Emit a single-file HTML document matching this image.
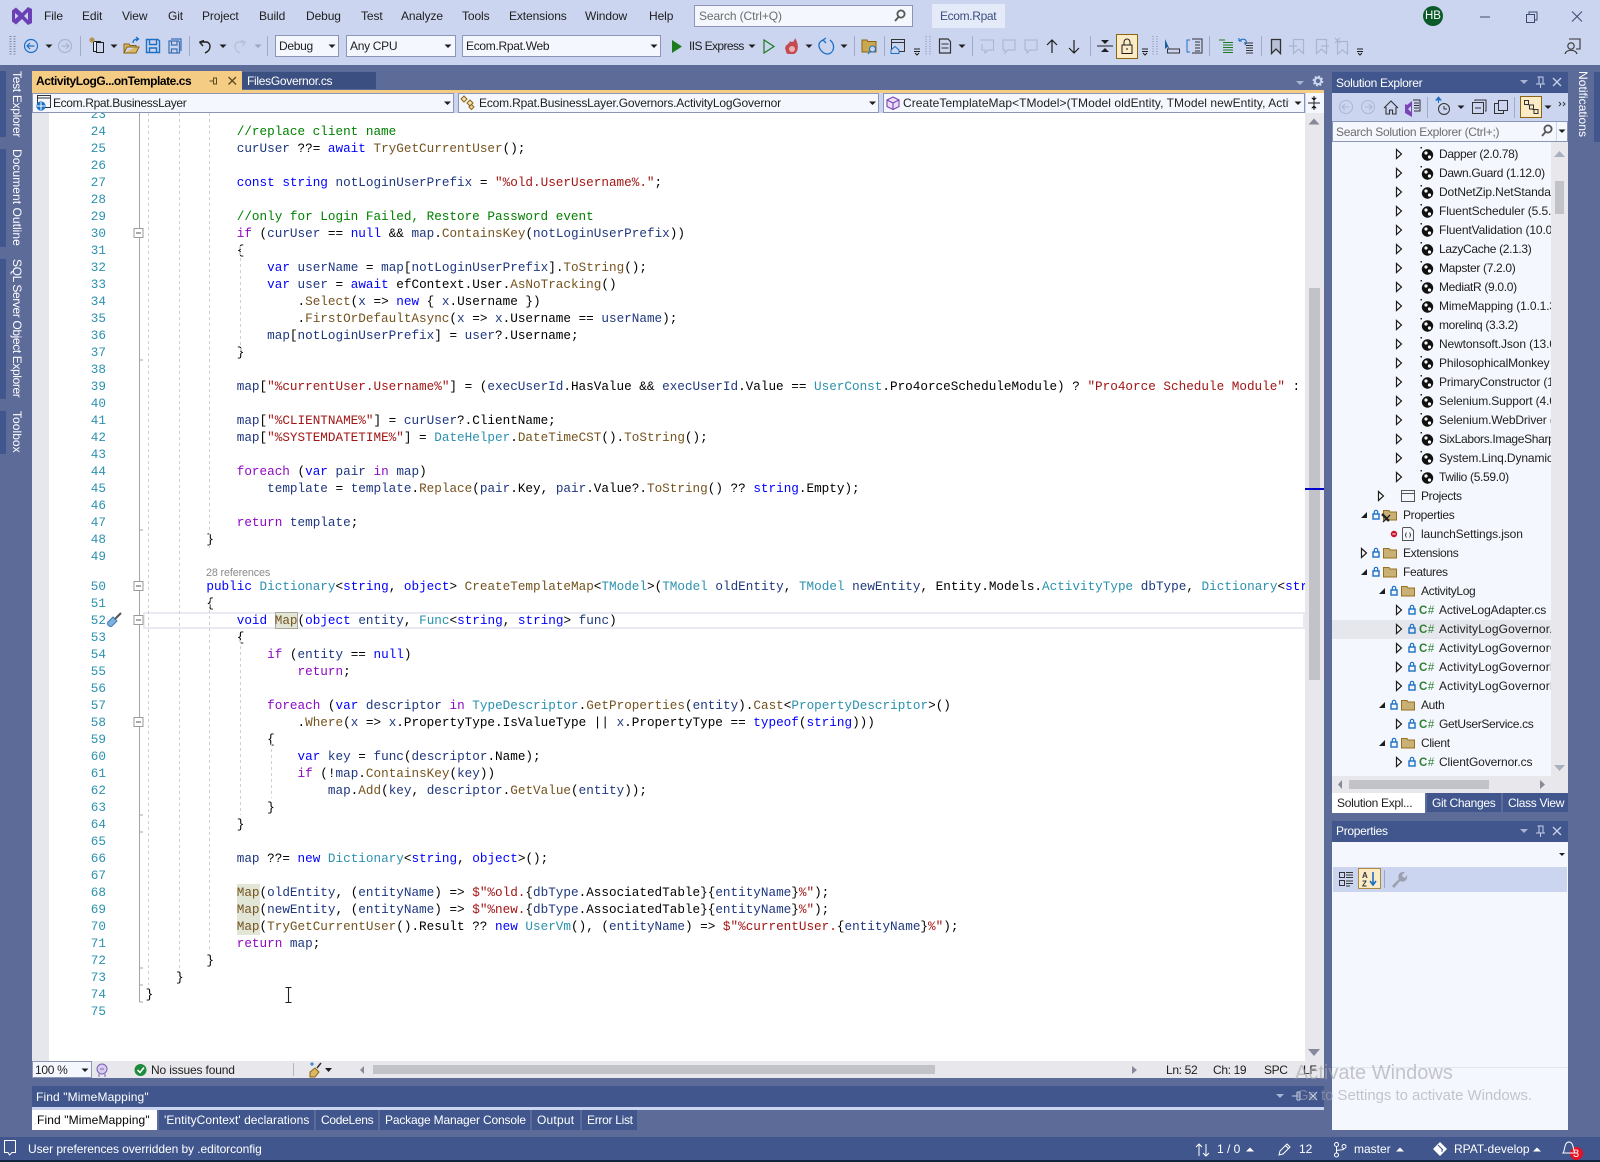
<!DOCTYPE html>
<html lang="en"><head><meta charset="utf-8"><title>Ecom.Rpat</title>
<style>
html,body{margin:0;padding:0;width:1600px;height:1162px;overflow:hidden;background:#5D6B99}
body{position:relative;font:12px/16px "Liberation Sans",sans-serif;color:#1E1E1E}
.b{position:absolute}
.t{position:absolute;white-space:nowrap;letter-spacing:-.1px}
.n{letter-spacing:-.35px}
.w{color:#fff;letter-spacing:-.3px}
.combo{position:absolute;background:#F5F7FE;border:1px solid #8A95B8;box-sizing:border-box;white-space:nowrap;overflow:hidden;line-height:19px;padding-left:3px;letter-spacing:-.3px}
.v{position:absolute;writing-mode:vertical-rl;white-space:nowrap;color:#fff;left:9px;letter-spacing:.05px}
.bar{position:absolute;background:#40568D}
pre{position:absolute;margin:0;font:12.67px/17px "Liberation Mono",monospace;color:#000;white-space:pre}
.k{color:#0000FF}.c{color:#8F08C4}.y{color:#2B91AF}.m{color:#74531F}.s{color:#A31515}.g{color:#008000}.l{color:#1F377F}
.hl{background:#E2E6D6;display:inline-block;height:17px}
#tree div{height:19px;line-height:19px;white-space:nowrap;position:absolute;letter-spacing:-.33px}
#tree div.wd{letter-spacing:-.12px}
#tree div.wa{letter-spacing:.15px}
.cs{position:absolute;left:87px;font-size:11.5px;color:#2F8033;letter-spacing:.6px;line-height:20px}
.cs b{font-weight:bold}
.tab{position:absolute;top:1110px;height:20px;background:#40568D;color:#fff;line-height:21px;white-space:nowrap;box-sizing:border-box;letter-spacing:-.05px}
svg{position:absolute;left:0;top:0;overflow:visible}
</style></head><body>

<div class="b" style="left:0;top:0;width:1600px;height:65px;background:#CCD5F0"></div>

<!-- menu -->
<span class="t" style="left:44px;top:8px">File</span>
<span class="t" style="left:82px;top:8px">Edit</span>
<span class="t" style="left:122px;top:8px">View</span>
<span class="t" style="left:168px;top:8px">Git</span>
<span class="t" style="left:202px;top:8px">Project</span>
<span class="t" style="left:259px;top:8px">Build</span>
<span class="t" style="left:306px;top:8px">Debug</span>
<span class="t" style="left:361px;top:8px">Test</span>
<span class="t" style="left:401px;top:8px">Analyze</span>
<span class="t" style="left:462px;top:8px">Tools</span>
<span class="t" style="left:509px;top:8px">Extensions</span>
<span class="t" style="left:585px;top:8px">Window</span>
<span class="t" style="left:649px;top:8px">Help</span>
<div class="b" style="left:694px;top:5px;width:219px;height:22px;background:#F5F7FE;border:1px solid #8A95B8;box-sizing:border-box"></div>
<span class="t" style="left:699px;top:8px;color:#6D6D6D">Search (Ctrl+Q)</span>
<div class="b" style="left:932px;top:4px;width:73px;height:24px;background:#E4EAF8"></div>
<span class="t n" style="left:940px;top:8px;color:#3B4F81">Ecom.Rpat</span>
<div class="b" style="left:1423px;top:6px;width:20px;height:20px;border-radius:50%;background:#0B5A2A"></div>
<span class="t" style="left:1425px;top:8px;color:#fff;font-size:11.5px;letter-spacing:0">HB</span>

<!-- toolbar combos -->
<div class="combo" style="left:275px;top:35px;width:64px;height:22px;line-height:21px">Debug</div>
<div class="combo" style="left:346px;top:35px;width:110px;height:22px;line-height:21px">Any CPU</div>
<div class="combo" style="left:462px;top:35px;width:199px;height:22px;line-height:21px">Ecom.Rpat.Web</div>
<span class="t" style="left:689px;top:38px;color:#1E1E1E;letter-spacing:-.6px">IIS Express</span>

<!-- left vertical tabs -->
<div class="bar" style="left:0;top:71px;width:6px;height:66px"></div>
<div class="bar" style="left:0;top:149px;width:6px;height:98px"></div>
<div class="bar" style="left:0;top:259px;width:6px;height:140px"></div>
<div class="bar" style="left:0;top:411px;width:6px;height:43px"></div>
<span class="v" style="top:71px;letter-spacing:-.3px">Test Explorer</span>
<span class="v" style="top:149px">Document Outline</span>
<span class="v" style="top:259px;letter-spacing:-.38px">SQL Server Object Explorer</span>
<span class="v" style="top:411px">Toolbox</span>
<div class="bar" style="left:1594px;top:72px;width:6px;height:70px"></div>
<span class="v" style="left:1575px;top:71px">Notifications</span>

<!-- doc tabs -->
<div class="b" style="left:32px;top:71px;width:210px;height:19px;background:#F5CC84"></div>
<span class="t" style="left:36px;top:73px;font-weight:bold;letter-spacing:-.45px;color:#000">ActivityLogG...onTemplate.cs</span>
<div class="b" style="left:242px;top:72px;width:134px;height:17px;background:#3B4F81"></div>
<span class="t w" style="left:247px;top:73px">FilesGovernor.cs</span>
<div class="b" style="left:32px;top:90px;width:1292px;height:3px;background:#F5CC84"></div>

<!-- nav bar -->
<div class="b" style="left:32px;top:93px;width:1292px;height:20px;background:#CCD5F0"></div>
<div class="combo" style="left:32px;top:93px;width:422px;height:20px;padding-left:20px;letter-spacing:-.35px">Ecom.Rpat.BusinessLayer</div>
<div class="combo" style="left:458px;top:93px;width:421px;height:20px;padding-left:20px;letter-spacing:-.18px">Ecom.Rpat.BusinessLayer.Governors.ActivityLogGovernor</div>
<div class="combo" style="left:883px;top:93px;width:422px;height:20px;padding-left:19px;padding-right:16px;letter-spacing:.06px"><div style="width:386px;overflow:hidden">CreateTemplateMap&lt;TModel&gt;(TModel oldEntity, TModel newEntity, ActivityType dbType)</div></div>
<div class="b" style="left:1306px;top:93px;width:18px;height:20px;background:#F5F7FE"></div>

<!-- editor -->
<div class="b" style="left:32px;top:113px;width:17px;height:948px;background:#E6E7ED"></div>
<div class="b" style="left:49px;top:113px;width:1256px;height:948px;background:#fff"></div>
<div class="b" style="left:1305px;top:113px;width:19px;height:948px;background:#E8E8EC"></div>
<div class="b" style="left:1309px;top:288px;width:11px;height:392px;background:#C2C3C9"></div>
<div class="b" style="left:1305px;top:488px;width:19px;height:2px;background:#0000CD"></div>
<div class="b" style="left:143px;top:612px;width:1162px;height:17px;box-sizing:border-box;border:2px solid #EAEAF2"></div>
<div class="b" style="left:275px;top:612px;width:23px;height:17px;box-sizing:border-box;background:#E2E6D6;border:1px solid #A8A8A0"></div>

<div class="b" style="left:49px;top:113px;width:1256px;height:948px;overflow:hidden">
<pre style="right:1199px;top:-7px;color:#2B91AF;text-align:right">23
24
25
26
27
28
29
30
31
32
33
34
35
36
37
38
39
40
41
42
43
44
45
46
47
48
49</pre>
<pre style="right:1199px;top:465px;color:#2B91AF;text-align:right">50
51
52
53
54
55
56
57
58
59
60
61
62
63
64
65
66
67
68
69
70
71
72
73
74
75</pre>
<span class="t" style="left:157px;top:452px;font-size:10.8px;color:#8A8A8A;letter-spacing:-.15px">28 references</span>
<pre style="left:96.6px;top:-7px">

            <span class="g">//replace client name</span>
            <span class="l">curUser</span> ??= <span class="k">await</span> <span class="m">TryGetCurrentUser</span>();

            <span class="k">const</span> <span class="k">string</span> <span class="l">notLoginUserPrefix</span> = <span class="s">"%old.UserUsername%."</span>;

            <span class="g">//only for Login Failed, Restore Password event</span>
            <span class="c">if</span> (<span class="l">curUser</span> == <span class="k">null</span> &amp;&amp; <span class="l">map</span>.<span class="m">ContainsKey</span>(<span class="l">notLoginUserPrefix</span>))
            {
                <span class="k">var</span> <span class="l">userName</span> = <span class="l">map</span>[<span class="l">notLoginUserPrefix</span>].<span class="m">ToString</span>();
                <span class="k">var</span> <span class="l">user</span> = <span class="k">await</span> efContext.User.<span class="m">AsNoTracking</span>()
                    .<span class="m">Select</span>(<span class="l">x</span> =&gt; <span class="k">new</span> { <span class="l">x</span>.Username })
                    .<span class="m">FirstOrDefaultAsync</span>(<span class="l">x</span> =&gt; <span class="l">x</span>.Username == <span class="l">userName</span>);
                <span class="l">map</span>[<span class="l">notLoginUserPrefix</span>] = <span class="l">user</span>?.Username;
            }

            <span class="l">map</span>[<span class="s">"%currentUser.Username%"</span>] = (<span class="l">execUserId</span>.HasValue &amp;&amp; <span class="l">execUserId</span>.Value == <span class="y">UserConst</span>.Pro4orceScheduleModule) ? <span class="s">"Pro4orce Schedule Module"</span> : <span class="l">curUser</span>?.Username;

            <span class="l">map</span>[<span class="s">"%CLIENTNAME%"</span>] = <span class="l">curUser</span>?.ClientName;
            <span class="l">map</span>[<span class="s">"%SYSTEMDATETIME%"</span>] = <span class="y">DateHelper</span>.<span class="m">DateTimeCST</span>().<span class="m">ToString</span>();

            <span class="c">foreach</span> (<span class="k">var</span> <span class="l">pair</span> <span class="c">in</span> <span class="l">map</span>)
                <span class="l">template</span> = <span class="l">template</span>.<span class="m">Replace</span>(<span class="l">pair</span>.Key, <span class="l">pair</span>.Value?.<span class="m">ToString</span>() ?? <span class="k">string</span>.Empty);

            <span class="c">return</span> <span class="l">template</span>;
        }</pre>
<pre style="left:96.6px;top:465px">        <span class="k">public</span> <span class="y">Dictionary</span>&lt;<span class="k">string</span>, <span class="k">object</span>&gt; <span class="m">CreateTemplateMap</span>&lt;<span class="y">TModel</span>&gt;(<span class="y">TModel</span> <span class="l">oldEntity</span>, <span class="y">TModel</span> <span class="l">newEntity</span>, Entity.Models.<span class="y">ActivityType</span> <span class="l">dbType</span>, <span class="y">Dictionary</span>&lt;<span class="k">string</span>, <span class="k">object</span>&gt; <span class="l">map</span> = <span class="k">null</span>)
        {
            <span class="k">void</span> <span class="m">Map</span>(<span class="k">object</span> <span class="l">entity</span>, <span class="y">Func</span>&lt;<span class="k">string</span>, <span class="k">string</span>&gt; <span class="l">func</span>)
            {
                <span class="c">if</span> (<span class="l">entity</span> == <span class="k">null</span>)
                    <span class="c">return</span>;

                <span class="c">foreach</span> (<span class="k">var</span> <span class="l">descriptor</span> <span class="c">in</span> <span class="y">TypeDescriptor</span>.<span class="m">GetProperties</span>(<span class="l">entity</span>).<span class="m">Cast</span>&lt;<span class="y">PropertyDescriptor</span>&gt;()
                    .<span class="m">Where</span>(<span class="l">x</span> =&gt; <span class="l">x</span>.PropertyType.IsValueType || <span class="l">x</span>.PropertyType == <span class="k">typeof</span>(<span class="k">string</span>)))
                {
                    <span class="k">var</span> <span class="l">key</span> = <span class="l">func</span>(<span class="l">descriptor</span>.Name);
                    <span class="c">if</span> (!<span class="l">map</span>.<span class="m">ContainsKey</span>(<span class="l">key</span>))
                        <span class="l">map</span>.<span class="m">Add</span>(<span class="l">key</span>, <span class="l">descriptor</span>.<span class="m">GetValue</span>(<span class="l">entity</span>));
                }
            }

            <span class="l">map</span> ??= <span class="k">new</span> <span class="y">Dictionary</span>&lt;<span class="k">string</span>, <span class="k">object</span>&gt;();

            <span class="hl"><span class="m">Map</span></span>(<span class="l">oldEntity</span>, (<span class="l">entityName</span>) =&gt; <span class="s">$"%old.</span>{<span class="l">dbType</span>.AssociatedTable}{<span class="l">entityName</span>}<span class="s">%"</span>);
            <span class="hl"><span class="m">Map</span></span>(<span class="l">newEntity</span>, (<span class="l">entityName</span>) =&gt; <span class="s">$"%new.</span>{<span class="l">dbType</span>.AssociatedTable}{<span class="l">entityName</span>}<span class="s">%"</span>);
            <span class="hl"><span class="m">Map</span></span>(<span class="m">TryGetCurrentUser</span>().Result ?? <span class="k">new</span> <span class="y">UserVm</span>(), (<span class="l">entityName</span>) =&gt; <span class="s">$"%currentUser.</span>{<span class="l">entityName</span>}<span class="s">%"</span>);
            <span class="c">return</span> <span class="l">map</span>;
        }
    }
}</pre>
</div>

<!-- editor bottom strip -->
<div class="b" style="left:32px;top:1061px;width:1292px;height:17px;background:#E8E8EC"></div>
<div class="combo" style="left:32px;top:1061px;width:60px;height:17px;line-height:16px;padding-left:2px;letter-spacing:-.3px">100 %</div>
<span class="t" style="left:151px;top:1062px;letter-spacing:-.15px">No issues found</span>
<div class="b" style="left:373px;top:1065px;width:562px;height:9px;background:#C2C3C9"></div>
<span class="t n" style="left:1166px;top:1062px">Ln: 52</span>
<span class="t n" style="left:1213px;top:1062px">Ch: 19</span>
<span class="t n" style="left:1264px;top:1062px">SPC</span>
<span class="t n" style="left:1303px;top:1062px">LF</span>

<!-- find panel -->
<div class="b" style="left:32px;top:1086px;width:1292px;height:21px;background:#40568D"></div>
<div class="b" style="left:32px;top:1107px;width:1292px;height:3px;background:#CCD5F0"></div>
<span class="t w" style="left:36px;top:1089px;letter-spacing:.12px">Find "MimeMapping"</span>
<div class="tab" style="left:32px;width:125px;background:#fff;color:#000;padding-left:5px;letter-spacing:.12px">Find "MimeMapping"</div>
<div class="tab" style="left:159px;width:155px;padding-left:5px;letter-spacing:.05px">'EntityContext' declarations</div>
<div class="tab" style="left:316px;width:62px;padding-left:5px;letter-spacing:-.3px">CodeLens</div>
<div class="tab" style="left:380px;width:150px;padding-left:5px;letter-spacing:-.17px">Package Manager Console</div>
<div class="tab" style="left:532px;width:48px;padding-left:5px;letter-spacing:.2px">Output</div>
<div class="tab" style="left:582px;width:55px;padding-left:5px;letter-spacing:-.3px">Error List</div>

<!-- solution explorer -->
<div class="b" style="left:1332px;top:72px;width:236px;height:21px;background:#40568D"></div>
<span class="t w" style="left:1336px;top:75px">Solution Explorer</span>
<div class="b" style="left:1332px;top:93px;width:236px;height:29px;background:#CCD5F0"></div>
<div class="b" style="left:1332px;top:121px;width:236px;height:21px;background:#F5F7FE;border:1px solid #8A95B8;box-sizing:border-box"></div>
<span class="t" style="left:1336px;top:124px;color:#6D6D6D;letter-spacing:-.3px">Search Solution Explorer (Ctrl+;)</span>
<div class="b" style="left:1332px;top:142px;width:236px;height:634px;background:#F5F7FE"></div>
<div class="b" style="left:1551px;top:142px;width:17px;height:634px;background:#E8E8EC"></div>
<div class="b" style="left:1555px;top:181px;width:9px;height:33px;background:#C2C3C9"></div>
<div class="b" style="left:1332px;top:620px;width:219px;height:19px;background:#E6E7ED"></div>
<div class="b" style="left:1332px;top:776px;width:236px;height:17px;background:#E8E8EC"></div>
<div class="b" style="left:1349px;top:780px;width:140px;height:9px;background:#C2C3C9"></div>

<div id="tree" class="b" style="left:1332px;top:143px;width:219px;height:633px;overflow:hidden">
<div style="left:107px;top:2px">Dapper (2.0.78)</div>
<div style="left:107px;top:21px">Dawn.Guard (1.12.0)</div>
<div class="wd" style="left:107px;top:40px">DotNetZip.NetStandard (1.15.0)</div>
<div class="wd" style="left:107px;top:59px">FluentScheduler (5.5.1)</div>
<div class="wd" style="left:107px;top:78px">FluentValidation (10.0.0)</div>
<div style="left:107px;top:97px">LazyCache (2.1.3)</div>
<div style="left:107px;top:116px">Mapster (7.2.0)</div>
<div style="left:107px;top:135px">MediatR (9.0.0)</div>
<div class="wd" style="left:107px;top:154px">MimeMapping (1.0.1.37)</div>
<div style="left:107px;top:173px">morelinq (3.3.2)</div>
<div class="wd" style="left:107px;top:192px">Newtonsoft.Json (13.0.1)</div>
<div class="wd" style="left:107px;top:211px">PhilosophicalMonkey (1.0.0)</div>
<div class="wd" style="left:107px;top:230px">PrimaryConstructor (1.2.0)</div>
<div class="wd" style="left:107px;top:249px">Selenium.Support (4.0.0)</div>
<div class="wd" style="left:107px;top:268px">Selenium.WebDriver (4.0.0)</div>
<div style="left:107px;top:287px">SixLabors.ImageSharp (1.0.3)</div>
<div class="wd" style="left:107px;top:306px">System.Linq.Dynamic.Core</div>
<div style="left:107px;top:325px">Twilio (5.59.0)</div>
<div style="left:89px;top:344px">Projects</div>
<div style="left:71px;top:363px">Properties</div>
<div class="wd" style="left:89px;top:382px">launchSettings.json</div>
<div style="left:71px;top:401px">Extensions</div>
<div style="left:71px;top:420px">Features</div>
<div style="left:89px;top:439px">ActivityLog</div>
<div class="wd" style="left:107px;top:458px">ActiveLogAdapter.cs</div>
<div class="wa" style="left:107px;top:477px">ActivityLogGovernor.cs</div>
<div class="wa" style="left:107px;top:496px">ActivityLogGovernorCreate.cs</div>
<div class="wa" style="left:107px;top:515px">ActivityLogGovernorEdit.cs</div>
<div class="wa" style="left:107px;top:534px">ActivityLogGovernorMap.cs</div>
<div style="left:89px;top:553px">Auth</div>
<div style="left:107px;top:572px">GetUserService.cs</div>
<div class="wd" style="left:107px;top:610px">ClientGovernor.cs</div>
<div style="left:89px;top:591px">Client</div>
<span class="cs" style="top:458px"><b>C</b>#</span>
<span class="cs" style="top:477px"><b>C</b>#</span>
<span class="cs" style="top:496px"><b>C</b>#</span>
<span class="cs" style="top:515px"><b>C</b>#</span>
<span class="cs" style="top:534px"><b>C</b>#</span>
<span class="cs" style="top:572px"><b>C</b>#</span>
<span class="cs" style="top:610px"><b>C</b>#</span>
</div>

<div class="b" style="left:1332px;top:793px;width:93px;height:20px;background:#fff"></div>
<span class="t" style="left:1337px;top:795px;letter-spacing:-.3px">Solution Expl...</span>
<div class="b" style="left:1427px;top:793px;width:74px;height:19px;background:#40568D"></div>
<span class="t w" style="left:1432px;top:795px">Git Changes</span>
<div class="b" style="left:1503px;top:793px;width:65px;height:19px;background:#40568D"></div>
<span class="t w" style="left:1508px;top:795px">Class View</span>

<!-- properties -->
<div class="b" style="left:1332px;top:821px;width:236px;height:21px;background:#40568D"></div>
<span class="t w" style="left:1336px;top:823px">Properties</span>
<div class="b" style="left:1332px;top:842px;width:236px;height:288px;background:#F5F7FE"></div>
<div class="b" style="left:1333px;top:867px;width:234px;height:25px;background:#CCD5F0"></div>
<div class="b" style="left:1358px;top:868px;width:23px;height:21px;background:#FBEBC6;border:1px solid #B08A3C;box-sizing:border-box"></div>
<div class="b" style="left:1332px;top:1067px;width:236px;height:1px;background:#E4E6EE"></div>

<!-- status bar -->
<div class="b" style="left:0;top:1137px;width:1600px;height:23px;background:#40568D"></div>
<div class="b" style="left:0;top:1160px;width:1600px;height:2px;background:#10263F"></div>
<span class="t w" style="left:28px;top:1141px;letter-spacing:-.07px">User preferences overridden by .editorconfig</span>
<span class="t w" style="left:1217px;top:1141px;letter-spacing:0">1 / 0</span>
<span class="t w" style="left:1299px;top:1141px;letter-spacing:0">12</span>
<span class="t w" style="left:1354px;top:1141px;letter-spacing:0">master</span>
<span class="t w" style="left:1454px;top:1141px;letter-spacing:0">RPAT-develop</span>
<div class="b" style="left:1570px;top:1147px;width:13px;height:13px;border-radius:50%;background:#E81123"></div>
<span class="t" style="left:1573px;top:1146px;color:#fff;font-size:11px;letter-spacing:0">3</span>

<svg width="1600" height="1162" viewBox="0 0 1600 1162" fill="none">
<defs>
<path id="dd" d="M-3.5,-1.5H3.5L0,2Z" fill="#1E1E1E"/>
<g id="ddg"><path d="M-3.5,-1.5H3.5L0,2Z" fill="#9AA3BF"/></g>
<g id="ddw"><path d="M-4,-2H4L0,2Z" fill="#A9B4D4"/></g>
<g id="over"><path d="M-3,-1H3M-3,1.5H3M-2,3L0,5L2,3" stroke="#1E1E1E" stroke-width="1"/></g>
<g id="grip"><path d="M-2,-10V10M2,-10V10" stroke="#7C86A6" stroke-dasharray="1 1.5"/></g>
<g id="nuget"><circle cx="1" cy="1" r="5.7" fill="#111"/><circle cx="-.5" cy="-1" r="1.6" fill="#fff"/><circle cx="3" cy="3" r="1.6" fill="#fff"/><rect x="-6" y="-7" width="1.5" height="1.5" fill="#222"/></g>
<path id="ar" d="M-2.5,-4.5L2.5,0L-2.5,4.5Z" fill="#fff" stroke="#1E1E1E" stroke-width="1.2"/>
<path id="ex" d="M3,-3V3H-3Z" fill="#1E1E1E"/>
<g id="lock"><rect x="-3" y="-1" width="6" height="5" fill="none" stroke="#1B6FC4" stroke-width="1.4"/><path d="M-1.7,-1V-3a1.7,1.7 0 0 1 3.4,0V-1" stroke="#1B6FC4" stroke-width="1.2"/></g>
<g id="fold"><path d="M-6.5,-4.5H-1L0,-3H6.5V5H-6.5Z" fill="#C9B074" stroke="#96701F" stroke-width="1"/></g>
<g id="box"><rect x="-4.5" y="-4.5" width="9" height="9" fill="#fff" stroke="#9A9A9A"/><path d="M-2.5,0H2.5" stroke="#555"/></g>
</defs>

<!-- VS logo -->
<path d="M12,10.5L16,7.5L22,13L28,7L32,9V23L28,25L22,19L16,24.5L12,21.5Z" fill="#6B3FB5"/>
<path d="M15,13V19L18.5,16ZM28,12L24,16L28,20Z" fill="#CCD5F0"/>
<!-- search mag -->
<g transform="translate(900,16)" stroke="#555" stroke-width="1.8"><circle cx="1" cy="-2" r="3.6"/><path d="M-1.5,1L-5,5"/></g>
<!-- window buttons -->
<path d="M1480,17H1490" stroke="#3C4A70"/>
<g stroke="#3C4A70"><rect x="1526.5" y="14.5" width="8" height="8"/><path d="M1529,14V12H1537V20H1535"/><path d="M1572,11.5L1582,21.5M1582,11.5L1572,21.5"/></g>

<!-- toolbar icons -->
<use href="#grip" x="12" y="46"/><use href="#grip" x="13" y="46"/>
<g stroke="#1B6FC4" stroke-width="1.2"><circle cx="31" cy="46" r="6.5"/><path d="M34.5,46H27.5M30,43L27,46L30,49"/></g>
<use href="#dd" x="49" y="46"/>
<g stroke="#A9B4D0" stroke-width="1.2"><circle cx="65" cy="46" r="6.5"/><path d="M61.5,46H68.5M66,43L69,46L66,49"/></g>
<path d="M80.5,36V56M189.5,36V56M267.5,36V56M854.5,36V56M884.5,36V56M972.5,36V56M1090.5,36V56M1209.5,36V56M1261.5,36V56" stroke="#A0ABC8"/>
<g transform="translate(97,46)" stroke="#1E1E1E"><rect x="-3.5" y="-4.5" width="7" height="10" fill="#E4E8F6"/><rect x="-.5" y="-3.5" width="7" height="10" fill="#CCD5F0"/><path d="M-7,-8L-3,-4M-3,-8L-7,-4M-5,-9V-3M-8,-6H-2" stroke="#B08A3C"/></g>
<use href="#dd" x="114" y="46"/>
<g transform="translate(131,46)"><path d="M-7,7V-2H-2L-1,-.5H5V1H-4L-7,7H5L8,1H5" fill="#D9B765" stroke="#8A6410"/><path d="M2,-3C2,-6 4,-7 7,-7M5,-9L7.5,-7L5,-5" stroke="#1B6FC4" stroke-width="1.3"/></g>
<g transform="translate(153,46)" stroke="#1B6FC4" stroke-width="1.4"><path d="M-6.5,-6.5H5L6.5,-5V6.5H-6.5Z"/><path d="M-3.5,-6.5V-1.5H3.5V-6.5M-3.5,6.5V2H3.5V6.5"/></g>
<g transform="translate(175,46)" stroke="#3B6FB0" stroke-width="1.2"><path d="M-4,-7H6V5"/><path d="M-6,-5H3.5L4.5,-4V7H-6Z"/><path d="M-3.5,-5V-1H2V-5M-3.5,7V3H2V7"/></g>
<path d="M199.5,42L203,46M199.5,42L204,40.5M200,42H206C211,42 212,50 205,53" stroke="#1E1E1E" stroke-width="1.4"/>
<use href="#dd" x="223" y="46"/>
<path d="M245.5,42L242,46M245.5,42L241,40.5M245,42H239C234,42 233,50 240,53" stroke="#B8C0D8" stroke-width="1.4"/>
<use href="#ddg" x="258" y="46"/>
<use href="#dd" x="332" y="46"/><use href="#dd" x="448" y="46"/><use href="#dd" x="654" y="46"/>
<path d="M672,40V53L682,46.5Z" fill="#1E7B1E"/>
<use href="#dd" x="752" y="46"/>
<path d="M764,40V53L774,46.5Z" stroke="#1E7B1E" stroke-width="1.2"/>
<path d="M786,51C783,45 789,45 790,41C792,43 794,42 795,38C799,44 799,52 794,54H789C787,54 786,53 786,51Z" fill="#C44A52"/><circle cx="792" cy="49" r="3" fill="#EBB0B0"/>
<use href="#dd" x="809" y="46"/>
<path d="M823,40C814,44 822,54 827,54C834,54 836,45 830,40M826,38L823,40L826,43" stroke="#1B6FC4" stroke-width="1.3"/>
<use href="#dd" x="844" y="46"/>
<g transform="translate(869,46)"><path d="M-7,-6H-2L-1,-4.5H7V6H-7Z" fill="#C9A850" stroke="#8A6410"/><circle cx="3.5" cy="3" r="3" fill="#CCD5F0" stroke="#1B6FC4"/><path d="M1.5,5L-1,8" stroke="#1B6FC4"/></g>
<g transform="translate(898,46)"><rect x="-6.5" y="-6.5" width="13" height="12" stroke="#333"/><path d="M-6,-3.5H6" stroke="#333"/><path d="M-7,4L-3,0.5L1,4V7.5H-7Z" fill="#CCD5F0" stroke="#1B6FC4"/></g>
<use href="#over" x="917" y="50"/><use href="#grip" x="928" y="46"/>
<g transform="translate(945,46)" stroke="#333"><path d="M-5.5,-7H3L5.5,-4.5V7H-5.5Z" stroke-width="1.2"/><path d="M-3.5,-2H3.5M-3.5,2H3.5"/></g>
<use href="#dd" x="962" y="46"/>
<g stroke="#A9B4D0"><path d="M980.5,40H993.5V50H988L985,53V50H982V44"/><path d="M1003,40H1015V50H1008L1005,53V50H1003Z"/><path d="M1025,40H1037V50H1030L1027,53V50H1025Z"/></g>
<path d="M1052,53V40M1047,45L1052,40L1057,45" stroke="#1E1E1E" stroke-width="1.2"/>
<path d="M1074,40V53M1069,48L1074,53L1079,48" stroke="#1E1E1E" stroke-width="1.2"/>
<g transform="translate(1105,46)"><path d="M-8,0H8" stroke="#1E1E1E"/><path d="M-4,-6H4L0,-2ZM-4,6H4L0,2Z" fill="#1E1E1E"/></g>
<rect x="1116.5" y="34.5" width="21" height="24" fill="#FBEBC6" stroke="#8A6410"/>
<g transform="translate(1127,47)" stroke="#1E1E1E"><rect x="-5" y="-2" width="10" height="8.5"/><path d="M-3,-2V-5a3,3 0 0 1 6,0V-2M0,1V3"/></g>
<use href="#over" x="1145" y="50"/><use href="#grip" x="1155" y="46"/>
<g transform="translate(1172,46)"><path d="M-7,-7V3L-4.5,1L-2,4Z" fill="#1B5E9E"/><rect x="-4.5" y="3" width="12" height="4" stroke="#333"/></g>
<g transform="translate(1194,46)" stroke="#333"><path d="M-2,-7H8V7H-2M1,-4H6M1,-1H6M1,2H6M1,5H6"/><path d="M-4,-6H-7V6H-4" stroke="#1B6FC4"/></g>
<g transform="translate(1226,46)" stroke="#1E7B1E"><path d="M-7,-6H-1M-3,-3.5H7M-3,-1H7M-3,1.5H7M-3,4H7M-3,6.5H7"/></g>
<g transform="translate(1246,46)"><path d="M-2,-3H7M0,-.5H7M0,2H7M0,4.5H7M0,7H7" stroke="#333"/><path d="M-7,-5C-3,-9 3,-6 -1,-1M-7,-5V-8M-7,-5H-4" stroke="#1B6FC4" stroke-width="1.1"/></g>
<path d="M1271.5,39.5H1280.5V53.5L1276,49L1271.5,53.5Z" fill="#B8C0D8" stroke="#333" stroke-width="1.3"/>
<g stroke="#A9B4D0" stroke-width="1.2"><path d="M1293.5,39.5H1303.5V53.5L1298.5,49L1293.5,53.5ZM1289,46H1297"/><path d="M1316.5,39.5H1326.5V53.5L1321.5,49L1316.5,53.5ZM1321,46H1329"/><path d="M1337.5,41.5H1347.5V54L1342.5,50L1337.5,54ZM1335,38L1340,43M1340,38L1335,43"/></g>
<use href="#over" x="1360" y="50"/>
<g transform="translate(1572,46)" stroke="#333" stroke-width="1.1"><path d="M-3,-7H8V3H4"/><circle cx="-1" cy="0" r="3.2"/><path d="M-7,8C-6,3 4,3 5,8"/></g>

<!-- doc tab icons -->
<g transform="translate(213.5,81)" stroke="#5A4A20"><path d="M-4,0H0M0,-3V3H3V-3ZM3,0"/></g>
<path d="M228.5,77L236,84.5M236,77L228.5,84.5" stroke="#5A4A20" stroke-width="1.3"/>
<use href="#ddw" x="1300" y="83"/>
<g transform="translate(1318,81)"><circle r="3.2" stroke="#CCD5F0" stroke-width="2"/><circle r="4.6" stroke="#CCD5F0" stroke-width="1.6" stroke-dasharray="2 1.6"/></g>

<!-- nav icons -->
<use href="#dd" x="447.5" y="103"/><use href="#dd" x="872.5" y="103"/><use href="#dd" x="1298" y="103"/>
<g transform="translate(44,103)"><rect x="-6.5" y="-7.5" width="13" height="12" stroke="#333"/><path d="M-6,-5H6" stroke="#333"/><circle cx="-3" cy="3" r="4.6" fill="#1B6FC4"/><path d="M-7,3H1M-3,-1V7" stroke="#fff"/></g>
<g transform="translate(468,103)" stroke="#8A6410" fill="#F2DFAC"><path d="M-7,-4L-4,-7L-1,-4L-4,-1Z"/><path d="M-1,0L2,-3L5,0L2,3Z"/><path d="M1,4L3.5,1.5L6,4L3.5,6.5Z"/></g>
<g transform="translate(893,103)" stroke="#7A45B5" stroke-width="1.1" fill="#EBDFF7"><path d="M0,-6L6,-3V3.5L0,6.5L-6,3.5V-3Z"/><path d="M-6,-3L0,0L6,-3M0,0V6.5" fill="none"/></g>
<g transform="translate(1314,103)"><path d="M-6,0H6" stroke="#1E1E1E"/><path d="M0,-7V7" stroke="#1E1E1E"/><path d="M-2.5,-5H2.5L0,-2.5ZM-2.5,5H2.5L0,2.5Z" fill="#1E1E1E" stroke="#1E1E1E" stroke-width=".5"/></g>

<!-- editor decorations -->
<path d="M139.5,113V1002M139.5,360H143M139.5,530H143M139.5,815H143M139.5,832H143M139.5,968H143M139.5,985H143M139.5,1002H143" stroke="#A5A5A5"/>
<g stroke="#CFCFCF" stroke-dasharray="3 3">
<path d="M148.5,113V985"/><path d="M179.5,113V968"/><path d="M209.5,113V550M209.5,598V951"/>
<path d="M240.5,246V352"/><path d="M240.5,640V815"/><path d="M271.5,743V798"/>
</g>
<use href="#box" x="138.5" y="233"/><use href="#box" x="138.5" y="586"/><use href="#box" x="138.5" y="620"/><use href="#box" x="138.5" y="722"/>
<g transform="translate(115,620)"><path d="M-7,2L-2,-3L2,1L-3,6C-5,8 -9,4 -7,2Z" fill="#7FB0DE" stroke="#3B7DB8"/><path d="M0,-1L6,-7" stroke="#555" stroke-width="2"/></g>
<path d="M1314,118.5L1319.5,124.5H1308.5Z" fill="#868999"/>
<path d="M1308,1049H1320L1314,1056Z" fill="#868999"/>
<path d="M285.5,987.5H291.5M288.5,987.5V1002.5M285.5,1002.5H291.5" stroke="#222" stroke-width="1.1"/>

<!-- editor status icons -->
<use href="#dd" x="85" y="1070"/>
<g transform="translate(102,1070)" stroke="#7A5FB5"><circle cy="-1" r="5" fill="#D8CDEF"/><path d="M-3,4V7M3,4V7M-2,-1H2"/></g>
<circle cx="140.5" cy="1070" r="6" fill="#1E8A3C"/><path d="M137.5,1070L140,1072.5L144,1067.5" stroke="#fff" stroke-width="1.5"/>
<path d="M293.5,1063V1076" stroke="#B5B5BD"/>
<g transform="translate(315,1070)"><path d="M-5,2L0,-2L4,2L0,7H-5Z" fill="#D9B765" stroke="#8A6410"/><path d="M2,-2L6,-7" stroke="#333" stroke-width="1.5"/><path d="M-5,-6H-1M-3,-8V-4" stroke="#1B6FC4"/></g>
<path d="M325,1068H332L328.5,1072Z" fill="#1E1E1E"/>
<path d="M364,1066V1074L360,1070Z" fill="#868999"/>
<path d="M1132,1066V1074L1137,1070Z" fill="#868999"/>

<!-- find panel icons -->
<use href="#ddw" x="1280" y="1096"/>
<g stroke="#C8D0EA"><path d="M1292,1096H1297M1297,1092V1100M1300,1092V1100M1297,1092H1300M1297,1100H1300"/><path d="M1309,1092L1317,1100M1317,1092L1309,1100" stroke-width="1.2"/></g>

<!-- sol toolbar -->
<use href="#ddw" x="1524" y="82"/>
<g stroke="#C8D0EA"><path d="M1537.5,77H1543.5M1539,77V84M1543,77V84M1536,84H1545M1540.5,84V88"/><path d="M1553,78L1561,86M1561,78L1553,86" stroke-width="1.3"/></g>
<g stroke="#AEB8D2" stroke-width="1.1"><circle cx="1346" cy="107" r="6.5"/><path d="M1349,107H1342.5M1345,104L1342,107L1345,110"/><circle cx="1368" cy="107" r="6.5"/><path d="M1365,107H1371.5M1369,104L1372,107L1369,110"/></g>
<path d="M1384,108L1391,101L1398,108M1386,107V114H1389.5V110H1392.5V114H1396V107" stroke="#333" stroke-width="1.1"/>
<path d="M1405,108V113L1412,117V101L1407,105L1405,104ZM1408,109L1411,106V112Z" fill="#7A45B5"/><path d="M1413,100H1420V111H1414M1414,103H1419M1414,105.5H1419M1414,108H1419" stroke="#333"/>
<path d="M1427.5,97V118M1514.5,97V118" stroke="#A0ABC8"/>
<g transform="translate(1443,107)"><circle cx="1" cy="2" r="5.5" stroke="#333"/><path d="M1,-1V2H4" stroke="#333"/><path d="M-7,-7H-2L-4.5,-10ZM-4.5,-7V-4" fill="#1B6FC4" stroke="#1B6FC4"/></g>
<use href="#dd" x="1461" y="107"/>
<g stroke="#333"><rect x="1472.5" y="102.5" width="11" height="11"/><path d="M1475,101V100H1486V111H1485M1475,108H1481"/></g>
<g stroke="#333"><rect x="1494.5" y="103.5" width="9" height="10"/><rect x="1498.5" y="100.5" width="9" height="10" fill="#CCD5F0"/></g>
<rect x="1520.5" y="96.5" width="21" height="21" fill="#FBEBC6" stroke="#8A6410"/>
<g stroke="#333"><rect x="1524.5" y="100.5" width="4" height="4"/><rect x="1529.5" y="105" width="4" height="4"/><rect x="1534" y="109.5" width="4" height="4"/><path d="M1527,104.5L1530,105M1532,109L1534.5,110"/></g>
<use href="#dd" x="1548" y="107"/>
<path d="M1559,102L1561,104L1559,106M1563,102L1565,104L1563,106" stroke="#333" fill="none" stroke-width=".9"/>
<g transform="translate(1547,131)" stroke="#555" stroke-width="1.8"><circle cx="1" cy="-2" r="3.6"/><path d="M-1.5,1L-5,5"/></g>
<path d="M1556.5,122V141" stroke="#CCD5F0"/>
<use href="#dd" x="1562" y="131"/>
<path d="M1559.5,151L1565,157H1554Z" fill="#A9B0C0"/>
<path d="M1554,765H1565L1559.5,771Z" fill="#A9B0C0"/>
<path d="M1342,780V789L1338,784.5Z" fill="#868999"/><path d="M1540,780V789L1545,784.5Z" fill="#868999"/>

<!-- tree arrows + nuget -->
<g>
<use href="#ar" x="1399" y="154"/><use href="#nuget" x="1426.5" y="154"/>
<use href="#ar" x="1399" y="173"/><use href="#nuget" x="1426.5" y="173"/>
<use href="#ar" x="1399" y="192"/><use href="#nuget" x="1426.5" y="192"/>
<use href="#ar" x="1399" y="211"/><use href="#nuget" x="1426.5" y="211"/>
<use href="#ar" x="1399" y="230"/><use href="#nuget" x="1426.5" y="230"/>
<use href="#ar" x="1399" y="249"/><use href="#nuget" x="1426.5" y="249"/>
<use href="#ar" x="1399" y="268"/><use href="#nuget" x="1426.5" y="268"/>
<use href="#ar" x="1399" y="287"/><use href="#nuget" x="1426.5" y="287"/>
<use href="#ar" x="1399" y="306"/><use href="#nuget" x="1426.5" y="306"/>
<use href="#ar" x="1399" y="325"/><use href="#nuget" x="1426.5" y="325"/>
<use href="#ar" x="1399" y="344"/><use href="#nuget" x="1426.5" y="344"/>
<use href="#ar" x="1399" y="363"/><use href="#nuget" x="1426.5" y="363"/>
<use href="#ar" x="1399" y="382"/><use href="#nuget" x="1426.5" y="382"/>
<use href="#ar" x="1399" y="401"/><use href="#nuget" x="1426.5" y="401"/>
<use href="#ar" x="1399" y="420"/><use href="#nuget" x="1426.5" y="420"/>
<use href="#ar" x="1399" y="439"/><use href="#nuget" x="1426.5" y="439"/>
<use href="#ar" x="1399" y="458"/><use href="#nuget" x="1426.5" y="458"/>
<use href="#ar" x="1399" y="477"/><use href="#nuget" x="1426.5" y="477"/>
<use href="#ar" x="1381" y="496"/>
<g transform="translate(1408,496)" stroke="#555"><rect x="-6.5" y="-5.5" width="13" height="11" fill="#F5F7FE"/><path d="M-6,-2.5H6"/></g>
<use href="#ex" x="1364" y="515"/><use href="#lock" x="1376" y="515"/><use href="#fold" x="1390" y="515"/>
<g transform="translate(1386,518)"><path d="M-4,-4L3,3" stroke="#222" stroke-width="2.4"/><path d="M-3,4L4,-3" stroke="#222" stroke-width="1.3"/></g>
<circle cx="1394" cy="534" r="3.2" fill="#C8102E"/><path d="M1392.3,534H1395.7" stroke="#fff"/>
<g transform="translate(1408,534)"><path d="M-5,-6.5H2.5L5.5,-3.5V6.5H-5.5V-6.5" fill="#F5F7FE" stroke="#555"/><path d="M-1.5,-1.5C-2.5,-1.5 -1.5,1 -3,1C-1.5,1 -2.5,3.5 -1.5,3.5M1.5,-1.5C2.5,-1.5 1.5,1 3,1C1.5,1 2.5,3.5 1.5,3.5" stroke="#222" stroke-width=".8"/></g>
<use href="#ar" x="1364" y="553"/><use href="#lock" x="1376" y="553"/><use href="#fold" x="1390" y="553"/>
<use href="#ex" x="1364" y="572"/><use href="#lock" x="1376" y="572"/><use href="#fold" x="1390" y="572"/>
<use href="#ex" x="1382" y="591"/><use href="#lock" x="1394" y="591"/><use href="#fold" x="1408" y="591"/>
<use href="#ar" x="1399" y="610"/><use href="#lock" x="1412" y="610"/>
<use href="#ar" x="1399" y="629"/><use href="#lock" x="1412" y="629"/>
<use href="#ar" x="1399" y="648"/><use href="#lock" x="1412" y="648"/>
<use href="#ar" x="1399" y="667"/><use href="#lock" x="1412" y="667"/>
<use href="#ar" x="1399" y="686"/><use href="#lock" x="1412" y="686"/>
<use href="#ex" x="1382" y="705"/><use href="#lock" x="1394" y="705"/><use href="#fold" x="1408" y="705"/>
<use href="#ar" x="1399" y="724"/><use href="#lock" x="1412" y="724"/>
<use href="#ex" x="1382" y="743"/><use href="#lock" x="1394" y="743"/><use href="#fold" x="1408" y="743"/>
<use href="#ar" x="1399" y="762"/><use href="#lock" x="1412" y="762"/>
</g>

<!-- properties icons -->
<use href="#ddw" x="1524" y="831"/>
<g stroke="#C8D0EA"><path d="M1537.5,826H1543.5M1539,826V833M1543,826V833M1536,833H1545M1540.5,833V837"/><path d="M1553,827L1561,835M1561,827L1553,835" stroke-width="1.3"/></g>
<path d="M1559,853H1565L1562,856Z" fill="#1E1E1E"/>
<g transform="translate(1346,879)" stroke="#333"><rect x="-6.5" y="-6.5" width="5" height="5"/><rect x="-6.5" y="1.5" width="5" height="5"/><path d="M0,-6.5H7M0,-4H7M0,-1.5H7M0,2H7M0,4.5H7M0,7H4"/></g>
<g transform="translate(1369,879)"><text x="-7" y="-1" font-family="Liberation Sans" font-weight="bold" font-size="8" fill="#333">A</text><text x="-7" y="7.5" font-family="Liberation Sans" font-weight="bold" font-size="8" fill="#333">Z</text><path d="M4,-7V5M1,2L4,6L7,2" stroke="#1B6FC4" stroke-width="1.6"/></g>
<path d="M1384.5,870V888" stroke="#9AA6C4"/>
<path d="M1392,886L1399,879C1397,875 1400,871 1405,872L1402,875L1403,877L1405,878L1407,875C1408,880 1404,883 1400,881L1394,888Z" fill="#9AA0AE"/>

<!-- status bar icons -->
<path d="M4.5,1140.5H15.5V1152.5H12L9.5,1155L8,1152.5H4.5Z" stroke="#fff"/>
<path d="M1199,1156V1144M1196,1147L1199,1144L1202,1147M1206,1144V1156M1203,1153L1206,1156L1209,1153" stroke="#fff"/>
<path d="M1246,1151.5H1254L1250,1147.5Z" fill="#fff"/><path d="M1396,1151.5H1404L1400,1147.5Z" fill="#fff"/><path d="M1533,1151.5H1541L1537,1147.5Z" fill="#fff"/>
<path d="M1279,1155L1280,1151L1287,1144L1290,1147L1283,1154ZM1285.5,1145.5L1288.5,1148.5" stroke="#fff"/>
<g stroke="#fff"><circle cx="1336.5" cy="1144.5" r="2"/><circle cx="1336.5" cy="1155" r="2"/><circle cx="1344" cy="1146.5" r="2"/><path d="M1336.5,1146.5V1153M1336.5,1151C1337,1149 1344,1151 1344,1148.5"/></g>
<path d="M1440,1142L1447,1149L1440,1156L1433,1149Z" fill="#fff"/><path d="M1438,1145L1442,1149V1152M1440,1147L1443,1150" stroke="#40568D"/>
<path d="M1563,1153C1565,1151 1564,1142 1569,1142C1574,1142 1573,1151 1575,1153Z" stroke="#fff"/>
</svg>

<!-- activation watermark -->
<span class="t" style="left:1295px;top:1061px;font-size:20px;line-height:24px;letter-spacing:0;color:rgba(165,165,170,.62)">Activate Windows</span>
<span class="t" style="left:1297px;top:1087px;font-size:14.9px;line-height:18px;letter-spacing:0;color:rgba(165,165,170,.62)">Go to Settings to activate Windows.</span>
</body></html>
